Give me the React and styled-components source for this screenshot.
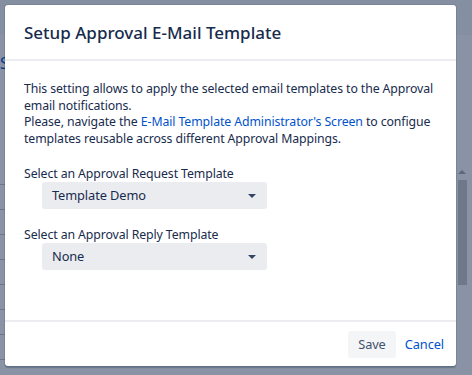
import React from "react";
import styled, { createGlobalStyle } from "styled-components";

const Global = createGlobalStyle`
  html, body { margin: 0; padding: 0; width: 472px; height: 375px; overflow: hidden; }
  body { font-family: "Noto Sans", "Open Sans", sans-serif; color: #172b4d; }
  * { box-sizing: border-box; }
`;

const Page = styled.div`
  position: relative;
  width: 472px;
  height: 375px;
  background: #ffffff;
  overflow: hidden;
`;

const PageHeader = styled.div`
  height: 35px;
  background: #f7f8fa;
`;

const PageBody = styled.div`
  display: flex;
  flex-direction: column;
  padding-top: 17px;
`;

const PageLetter = styled.div`
  font-size: 16px;
  color: #0052cc;
  height: 108px;
`;

const PageRow = styled.div`
  height: 25px;
  border-bottom: 1px solid #c1c7d0;
  width: 20px;
`;

const Blanket = styled.div`
  position: absolute;
  inset: 0;
  background: rgba(9, 30, 66, 0.48);
  display: flex;
  align-items: flex-start;
  justify-content: flex-start;
  padding: 5px 0 0 5px;
`;

const Scrollbar = styled.div`
  position: absolute;
  right: 5px;
  top: 170px;
  width: 10px;
  display: flex;
  flex-direction: column;
  align-items: center;
`;

const ScrollArrow = styled.div`
  width: 0;
  height: 0;
  border-left: 4px solid transparent;
  border-right: 4px solid transparent;
  border-bottom: 4px solid #5e6778;
  margin-bottom: 6px;
`;

const ScrollThumb = styled.div`
  width: 9px;
  height: 105px;
  background: #6f7889;
`;

const Modal = styled.div`
  position: relative;
  width: 451px;
  height: 361px;
  background: #ffffff;
  border-radius: 3px;
  box-shadow: 0 0 0 1px rgba(9, 30, 66, 0.08), 0 2px 1px rgba(9, 30, 66, 0.25);
  display: flex;
  flex-direction: column;
`;

const Header = styled.div`
  height: 56px;
  border-bottom: 2px solid #ebecf0;
  display: flex;
  align-items: center;
  padding: 0 19px;
`;

const Title = styled.h1`
  margin: 0;
  font-size: 17px;
  font-weight: 500;
  color: #172b4d;
`;

const Body = styled.div`
  flex: 1;
  padding: 20px 19px 0;
  font-size: 12.3px;
  letter-spacing: -0.1px;
  line-height: 16.5px;
`;

const Para = styled.p`
  margin: 0;
`;

const Link = styled.a`
  color: #0052cc;
  text-decoration: none;
`;

const Field = styled.div`
  margin-top: ${(p) => p.$top}px;
  display: flex;
  flex-direction: column;
`;

const Label = styled.label`
  line-height: 16px;
  color: #172b4d;
`;

const Select = styled.div`
  margin-left: 18px;
  width: 225px;
  height: 27px;
  background: #ebecf0;
  border-radius: 3px;
  display: flex;
  align-items: center;
  justify-content: space-between;
  padding: 0 10px;
  font-size: 12.8px;
  color: #172b4d;
`;

const Caret = styled.span`
  width: 0;
  height: 0;
  border-left: 4px solid transparent;
  border-right: 4px solid transparent;
  border-top: 4px solid #344563;
  margin-right: 1px;
`;

const Footer = styled.div`
  height: 46px;
  border-top: 2px solid #ebecf0;
  display: flex;
  align-items: center;
  justify-content: flex-end;
  padding: 0 12px 0 0;
  gap: 9px;
`;

const Button = styled.button`
  font-family: inherit;
  font-size: 12.8px;
  letter-spacing: -0.1px;
  height: 27px;
  padding: 0 ${(p) => (p.$link ? "0" : "10px")};
  border: none;
  border-radius: 3px;
  background: ${(p) => (p.$link ? "transparent" : "#f4f5f7")};
  color: ${(p) => (p.$link ? "#0052cc" : "#42526e")};
  cursor: pointer;
`;

export default function App() {
  return (
    <>
      <Global />
      <Page>
        <PageHeader />
        <PageBody>
          <PageLetter>S</PageLetter>
          {Array.from({ length: 8 }).map((_, i) => (
            <PageRow key={i} />
          ))}
        </PageBody>
        <Blanket>
          <Modal>
            <Header>
              <Title>Setup Approval E-Mail Template</Title>
            </Header>
            <Body>
              <Para>
                This setting allows to apply the selected email templates to the Approval email notifications.
              </Para>
              <Para>
                Please, navigate the <Link href="#">E-Mail Template Administrator's Screen</Link> to configue
                templates reusable across different Approval Mappings.
              </Para>
              <Field $top={19}>
                <Label>Select an Approval Request Template</Label>
                <Select>
                  <span>Template Demo</span>
                  <Caret />
                </Select>
              </Field>
              <Field $top={18}>
                <Label>Select an Approval Reply Template</Label>
                <Select>
                  <span>None</span>
                  <Caret />
                </Select>
              </Field>
            </Body>
            <Footer>
              <Button>Save</Button>
              <Button $link>Cancel</Button>
            </Footer>
          </Modal>
          <Scrollbar>
            <ScrollArrow />
            <ScrollThumb />
          </Scrollbar>
        </Blanket>
      </Page>
    </>
  );
}
